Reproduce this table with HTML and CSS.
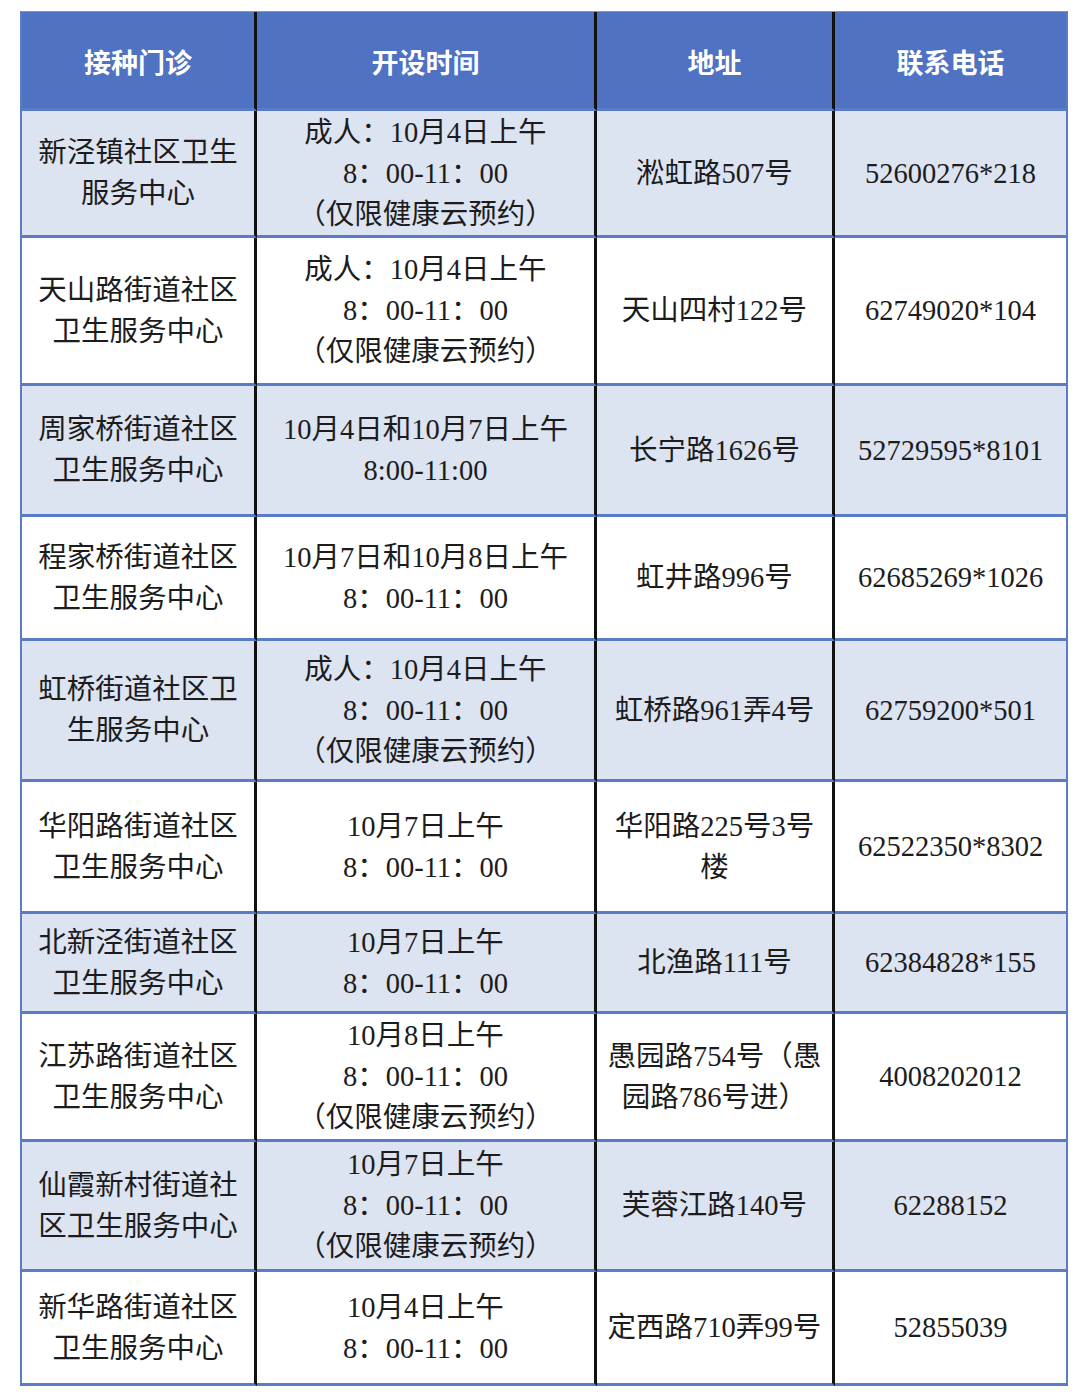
FILE: index.html
```html
<!DOCTYPE html>
<html lang="zh-CN">
<head>
<meta charset="utf-8">
<title>接种门诊</title>
<link rel="stylesheet" href="styles.css">
</head>
<body>
<div class="sheet">
  <div class="grid">
    <div class="c hd">接种门诊</div>
    <div class="c hd">开设时间</div>
    <div class="c hd">地址</div>
    <div class="c hd last">联系电话</div>

    <div class="c lt">新泾镇社区卫生<br>服务中心</div>
    <div class="c lt">成人：10月4日上午<br>8：00-11：00<br>（仅限健康云预约）</div>
    <div class="c lt">淞虹路507号</div>
    <div class="c lt last">52600276*218</div>

    <div class="c">天山路街道社区<br>卫生服务中心</div>
    <div class="c">成人：10月4日上午<br>8：00-11：00<br>（仅限健康云预约）</div>
    <div class="c">天山四村122号</div>
    <div class="c last">62749020*104</div>

    <div class="c lt">周家桥街道社区<br>卫生服务中心</div>
    <div class="c lt">10月4日和10月7日上午<br>8:00-11:00</div>
    <div class="c lt">长宁路1626号</div>
    <div class="c lt last">52729595*8101</div>

    <div class="c">程家桥街道社区<br>卫生服务中心</div>
    <div class="c">10月7日和10月8日上午<br>8：00-11：00</div>
    <div class="c">虹井路996号</div>
    <div class="c last">62685269*1026</div>

    <div class="c lt">虹桥街道社区卫<br>生服务中心</div>
    <div class="c lt">成人：10月4日上午<br>8：00-11：00<br>（仅限健康云预约）</div>
    <div class="c lt">虹桥路961弄4号</div>
    <div class="c lt last">62759200*501</div>

    <div class="c">华阳路街道社区<br>卫生服务中心</div>
    <div class="c">10月7日上午<br>8：00-11：00</div>
    <div class="c">华阳路225号3号<br>楼</div>
    <div class="c last">62522350*8302</div>

    <div class="c lt">北新泾街道社区<br>卫生服务中心</div>
    <div class="c lt">10月7日上午<br>8：00-11：00</div>
    <div class="c lt">北渔路111号</div>
    <div class="c lt last">62384828*155</div>

    <div class="c">江苏路街道社区<br>卫生服务中心</div>
    <div class="c">10月8日上午<br>8：00-11：00<br>（仅限健康云预约）</div>
    <div class="c">愚园路754号（愚<br>园路786号进）</div>
    <div class="c last">4008202012</div>

    <div class="c lt">仙霞新村街道社<br>区卫生服务中心</div>
    <div class="c lt">10月7日上午<br>8：00-11：00<br>（仅限健康云预约）</div>
    <div class="c lt">芙蓉江路140号</div>
    <div class="c lt last">62288152</div>

    <div class="c">新华路街道社区<br>卫生服务中心</div>
    <div class="c">10月4日上午<br>8：00-11：00</div>
    <div class="c">定西路710弄99号</div>
    <div class="c last">52855039</div>
  </div>
</div>
</body>
</html>
```

FILE: styles.css
```css
html, body {
  margin: 0;
  padding: 0;
  background: #ffffff;
}

.sheet {
  padding: 11px 0 0 20px;
}

.grid {
  width: 1048px;
  box-sizing: border-box;
  display: grid;
  grid-template-columns: 235px 340px 238px 231px;
  grid-template-rows: 99px 127px 148px 131px 124px 141px 132px 100px 128px 130px 114px;
  border-left: 2px solid #5a7cc6;
  border-right: 2px solid #5a7cc6;
  border-top: 1px solid #7e97d2;
  font-family: "Liberation Serif", "Noto Sans CJK SC", serif;
  font-size: 28.5px;
  line-height: 41px;
  color: #1c1c1c;
}

.c {
  box-sizing: border-box;
  display: flex;
  align-items: center;
  justify-content: center;
  text-align: center;
  border-bottom: 3px solid #5a7cc6;
  border-right: 3px solid #111111;
  background: #ffffff;
  padding: 0 2px;
}

.c.last {
  border-right: none;
}

.c.lt {
  background: #dce3f1;
}

.c.hd {
  background: #4f72c3;
  color: #ffffff;
  font-family: "Noto Sans CJK SC", sans-serif;
  font-weight: 700;
  font-size: 27px;
  padding-top: 2px;
}
```
